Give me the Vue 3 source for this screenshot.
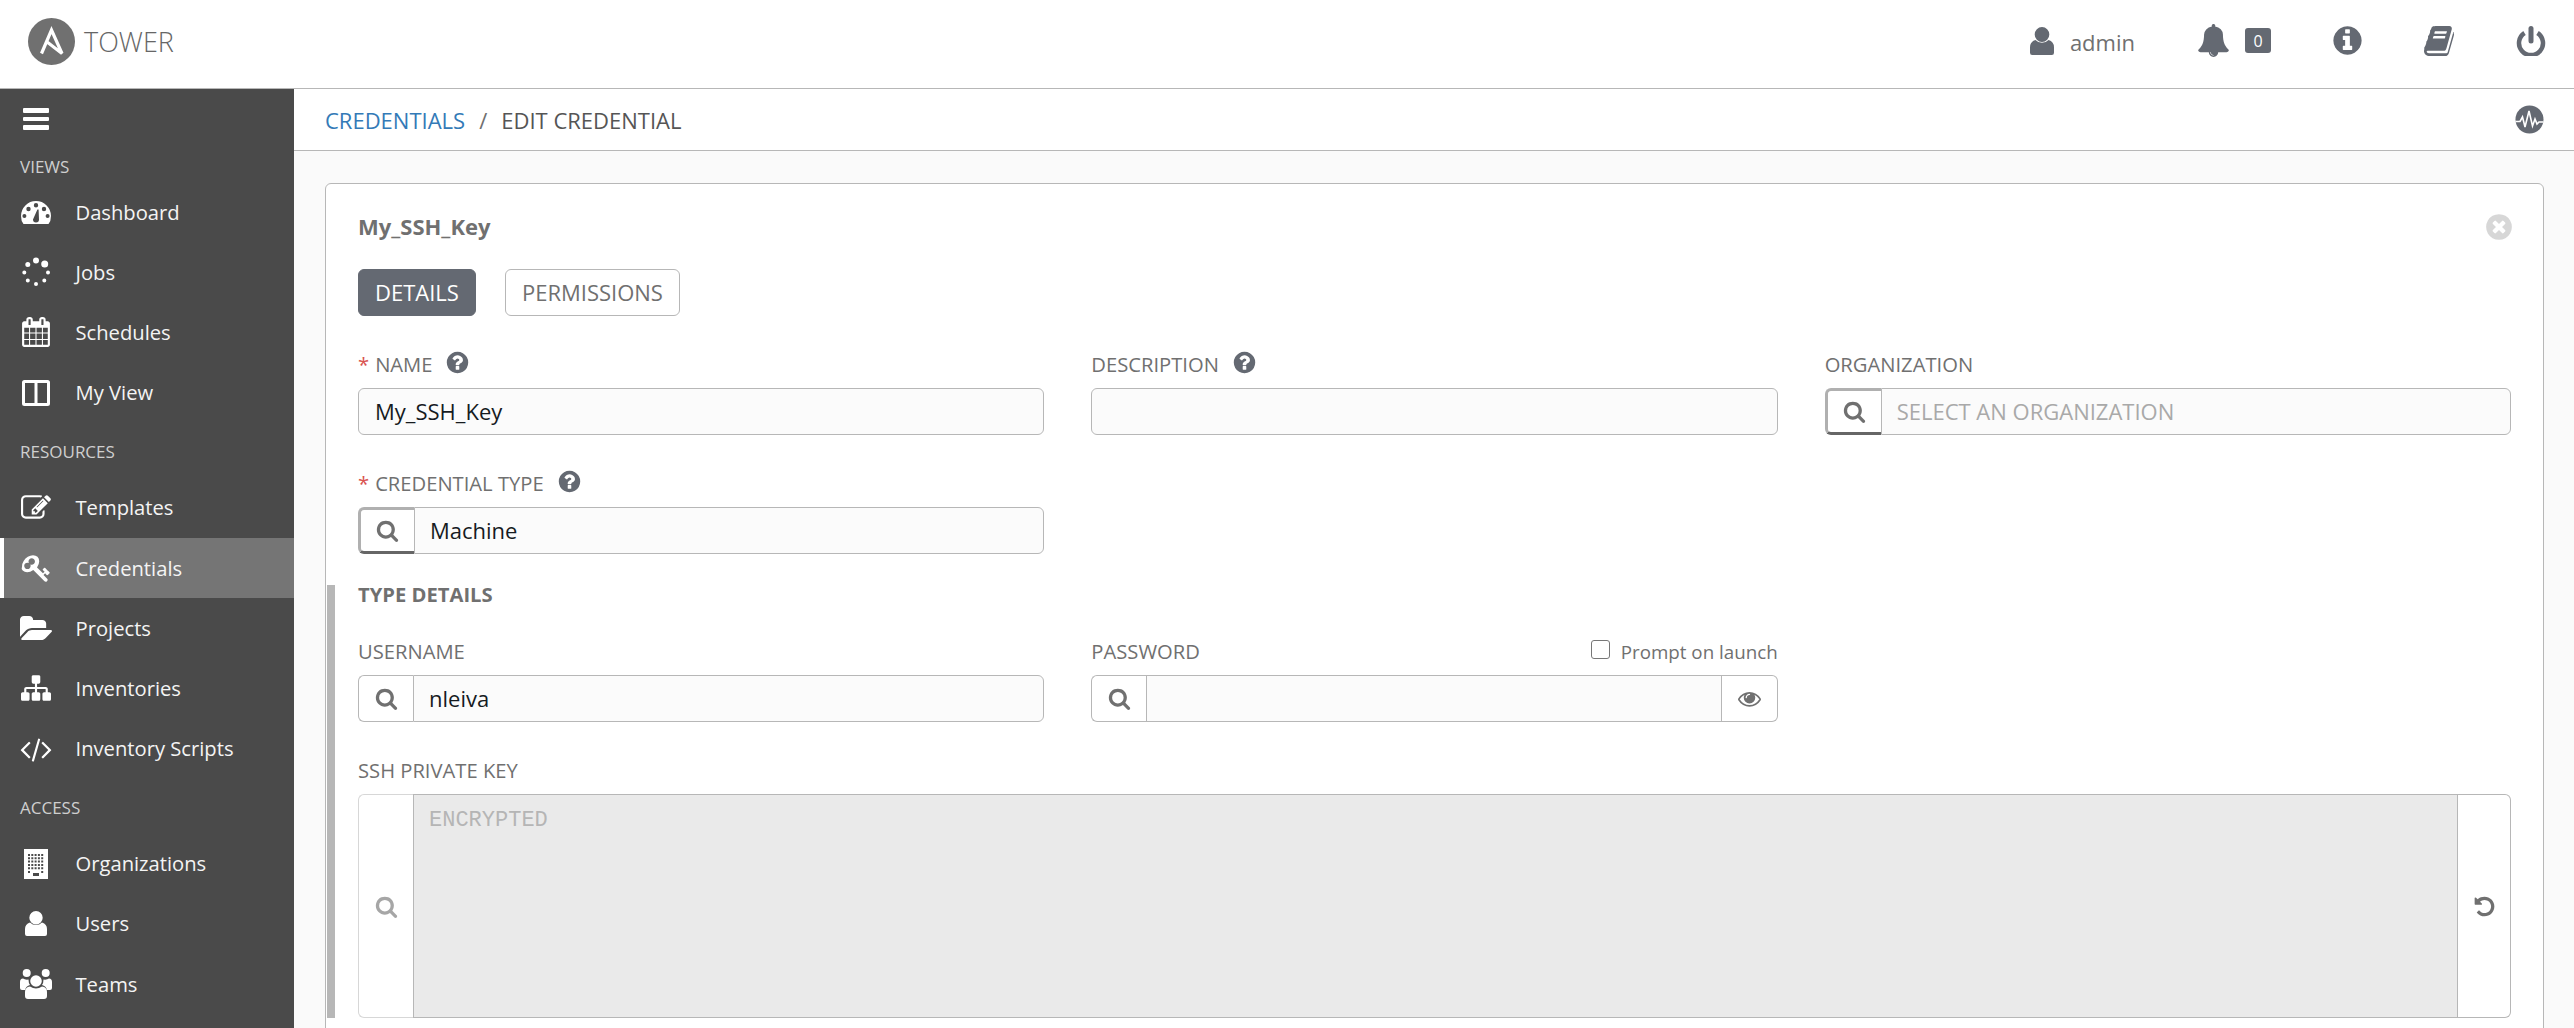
<script setup>
const circ = (cx, cy, r) => `M${cx - r} ${cy}a${r} ${r} 0 1 0 ${2 * r} 0a${r} ${r} 0 1 0 ${-2 * r} 0z`
const rect = (x, y, w, h) => `M${x} ${y}h${w}v${h}h${-w}z`

const P = {
  search: 'M1216 832q0-185-131.5-316.5T768 384 451.5 515.5 320 832t131.5 316.5T768 1280t316.5-131.5T1216 832zm512 832q0 52-38 90t-90 38q-54 0-90-38l-343-342q-179 124-399 124-143 0-273.5-55.5t-225-150-150-225T64 832t55.5-273.5 150-225 225-150T768 128t273.5 55.5 225 150 150 225T1472 832q0 220-124 399l343 343q37 37 37 90z',
  bell: 'M912 1696q0-16-16-16-59 0-101.5-42.5T752 1536q0-16-16-16t-16 16q0 73 51.5 124.5T896 1712q16 0 16-16zm816-288q0 52-38 90t-90 38h-448q0 106-75 181t-181 75-181-75-75-181H192q-52 0-90-38t-38-90q50-42 91-88t85-119.5 74.5-158.5 50-206T384 576q0-152 117-282.5T808 132q-8-19-8-39 0-40 28-68t68-28 68 28 28 68q0 20-8 39 190 28 307 158.5T1408 576q0 139 19.5 260t50 206 74.5 158.5 85 119.5 91 88z',
  info: 'M1152 1376v-160q0-14-9-23t-23-9h-96V672q0-14-9-23t-23-9H672q-14 0-23 9t-9 23v160q0 14 9 23t23 9h96v320h-96q-14 0-23 9t-9 23v160q0 14 9 23t23 9h448q14 0 23-9t9-23zm-128-896V320q0-14-9-23t-23-9H800q-14 0-23 9t-9 23v160q0 14 9 23t23 9h192q14 0 23-9t9-23zm640 416q0 209-103 385.5T1281.5 1561 896 1664t-385.5-103T231 1281.5 128 896t103-385.5T510.5 231 896 128t385.5 103T1561 510.5 1664 896z',
  question: 'M1024 1376v-192q0-14-9-23t-23-9H800q-14 0-23 9t-9 23v192q0 14 9 23t23 9h192q14 0 23-9t9-23zm256-672q0-88-55.5-163T1086 425t-170-41q-243 0-371 213-15 24 8 42l132 100q7 6 19 6 16 0 25-12 53-68 86-92 34-24 86-24 48 0 85.5 26t37.5 59q0 38-20 61t-68 45q-63 28-115.5 86.5T768 1020v36q0 14 9 23t23 9h192q14 0 23-9t9-23q0-19 21.5-49.5T1109 957q32-18 49-28.5t46-35 44.5-48 28-60.5 12.5-81zm384 192q0 209-103 385.5T1281.5 1561 896 1664t-385.5-103T231 1281.5 128 896t103-385.5T510.5 231 896 128t385.5 103T1561 510.5 1664 896z',
  close: 'M1277 1122q0-26-19-45L1077 896l181-181q19-19 19-45 0-27-19-46l-90-90q-19-19-46-19-26 0-45 19L896 715 715 534q-19-19-45-19-27 0-46 19l-90 90q-19 19-19 46 0 26 19 45l181 181-181 181q-19 19-19 45 0 27 19 46l90 90q19 19 46 19 26 0 45-19l181-181 181 181q19 19 45 19 27 0 46-19l90-90q19-19 19-46zm387-226q0 209-103 385.5T1281.5 1561 896 1664t-385.5-103T231 1281.5 128 896t103-385.5T510.5 231 896 128t385.5 103T1561 510.5 1664 896z',
  book: 'M1639 478q40 57 18 129l-275 906q-19 64-76.5 107.5T1183 1664H260q-77 0-148.5-53.5T12 1479q-24-67-2-127 0-4 3-27t4-37q1-8-3-21.5t-3-19.5q2-11 8-21t16.5-23.5T51 1179q23-38 45-91.5t30-91.5q3-10 .5-30t-.5-28q3-11 17-28t17-23q21-36 42-92t25-90q1-9-2.5-32t.5-28q4-13 22-30.5t22-22.5q19-26 42.5-84.5T339 418q1-8-3-25.5t-2-26.5q2-8 9-18t18-23 17-21q8-12 16.5-30.5t15-35 16-36 19.5-32T492 138.5 526 127t45 5l-1 3q54-16 73-16h761q74 0 114 56t18 130l-274 906q-36 119-71.5 153.5T1062 1398H193q-27 0-38 15-11 16-1 43 24 70 144 70h923q29 0 56-15.5t35-41.5l300-987q7-22 5-57 38 15 59 43zm-1064 2q-4 13 2 22.5t20 9.5h608q13 0 25.5-9.5T1247 480l21-64q4-13-2-22.5t-20-9.5H638q-13 0-25.5 9.5T596 416zm-83 256q-4 13 2 22.5t20 9.5h608q13 0 25.5-9.5T1164 736l21-64q4-13-2-22.5t-20-9.5H555q-13 0-25.5 9.5T513 672z',
  eye: 'M1664 960q-152-236-381-353 61 104 61 225 0 185-131.5 316.5T896 1280t-316.5-131.5T448 832q0-121 61-225-229 117-381 353 133 205 333.5 326.5T896 1408t434.5-121.5T1664 960zM944 576q0-20-14-34t-34-14q-125 0-214.5 89.5T592 832q0 20 14 34t34 14 34-14 14-34q0-86 61-147t147-61q20 0 34-14t14-34zm848 384q0 34-20 69-140 230-376.5 368.5T896 1536t-499.5-139T20 1029q-20-35-20-69t20-69q140-229 376.5-368T896 384t499.5 139T1772 891q20 35 20 69z',
  undo: 'M1664 896q0 156-61 298t-164 245-245 164-298 61q-172 0-327-72.5T305 1387q-7-10-6.5-22.5t8.5-20.5l137-138q10-9 25-9 16 2 23 12 73 95 179 147t225 52q104 0 198.5-40.5T1258 1258t109.5-163.5T1408 896t-40.5-198.5T1258 534t-163.5-109.5T896 384q-98 0-188 35.5T548 521l137 138q31 30 14 69-17 40-59 40H192q-26 0-45-19t-19-45V256q0-42 40-59 39-17 69 14l130 129q107-101 244.5-156.5T896 128q156 0 298 61t245 164 164 245 61 298z',
  user: circ(11, 6.7, 6.7) + 'M0 23v-5q0-5 5-6.5q2.6 2.6 6 2.6t6-2.6q5 1.5 5 6.5v5q0 2-2 2H2q-2 0-2-2z'
}

const buildingHoles = () => {
  let d = rect(0, 0, 24, 30)
  for (let c = 0; c < 5; c++) {
    for (let r = 0; r < 5; r++) d += rect(4 + c * 3.3, 5 + r * 3.3, 2, 2)
  }
  d += rect(4, 22, 2, 2) + rect(17.2, 22, 2, 2) + rect(9, 24, 6, 3)
  return d
}

const sections = [
  {
    title: 'VIEWS',
    items: [
      { label: 'Dashboard', w: 30, h: 23, vb: '0 0 30 23', rule: 'evenodd',
        d: 'M2.5 23Q0 20 0 15A15 15 0 0 1 30 15Q30 20 27.5 23Z' + circ(15, 4.2, 2.2) + circ(7.5, 8, 2.2) + circ(23, 8, 2.2) + circ(3.4, 15, 2) + circ(26.6, 15, 2) + 'M12 18.5A3 3 0 0 0 18 18.5L17.6 8.5H16.4Z' },
      { label: 'Jobs', w: 30, h: 30, vb: '0 0 30 30',
        d: circ(15, 3.5, 3) + circ(23.7, 7, 3.5) + circ(27, 15.5, 2) + circ(23.3, 23.5, 2) + circ(15, 27, 2) + circ(6.8, 23.5, 2) + circ(3.3, 15.5, 2) + circ(6.8, 7.5, 2.5) },
      { label: 'Schedules', w: 30, h: 30, vb: '0 0 1792 1792',
        d: 'M192 1664h288v-288H192v288zm352 0h320v-288H544v288zm-352-352h288V992H192v320zm352 0h320V992H544v320zM192 928h288V640H192v288zm736 736h320v-288H928v288zM544 928h320V640H544v288zm768 736h288v-288h-288v288zm-384-352h320V992H928v320zM576 448V160q0-13-9.5-22.5T544 128h-64q-13 0-22.5 9.5T448 160v288q0 13 9.5 22.5T480 480h64q13 0 22.5-9.5T576 448zm736 864h288V992h-288v320zM928 928h320V640H928v288zm384 0h288V640h-288v288zm32-480V160q0-13-9.5-22.5T1312 128h-64q-13 0-22.5 9.5T1216 160v288q0 13 9.5 22.5t22.5 9.5h64q13 0 22.5-9.5T1344 448zm384-64v1280q0 52-38 90t-90 38H192q-52 0-90-38t-38-90V384q0-52 38-90t90-38h128v-96q0-66 47-113T480 0h64q66 0 113 47t47 113v96h384v-96q0-66 47-113t113-47h64q66 0 113 47t47 113v96h128q52 0 90 38t38 90z' },
      { label: 'My View', w: 28, h: 26, vb: '0 0 28 26', rule: 'evenodd',
        d: 'M2.5 0h23A2.5 2.5 0 0 1 28 2.5v21a2.5 2.5 0 0 1-2.5 2.5h-23A2.5 2.5 0 0 1 0 23.5v-21A2.5 2.5 0 0 1 2.5 0z' + rect(3, 3, 9.5, 20) + rect(15.5, 3, 9.5, 20) }
    ]
  },
  {
    title: 'RESOURCES',
    items: [
      { label: 'Templates', w: 30, h: 30, vb: '0 0 1792 1792',
        d: 'M888 1184l116-116-152-152-116 116v56h96v96h56zm440-720q-16-16-33 1L945 815q-17 17-1 33t33-1l350-350q17-17 1-33zm80 594v190q0 119-84.5 203.5T1120 1536H288q-119 0-203.5-84.5T0 1248V416q0-119 84.5-203.5T288 128h832q63 0 117 25 15 7 18 23 3 17-9 29l-49 49q-14 14-32 8-23-6-45-6H288q-66 0-113 47t-47 113v832q0 66 47 113t113 47h832q66 0 113-47t47-113v-126q0-13 9-22l64-64q15-15 35-7t20 29zm-96-738l288 288-672 672H640V992zm444 132l-92 92-288-288 92-92q28-28 68-28t68 28l152 152q28 28 28 68t-28 68z' },
      { label: 'Credentials', active: true, w: 30, h: 30, vb: '0 0 1792 1792',
        d: 'M832 512q0-80-56-136t-136-56-136 56-56 136q0 42 19 83-41-19-83-19-80 0-136 56t-56 136 56 136 136 56 136-56 56-136q0-42-19-83 41 19 83 19 80 0 136-56t56-136zm851 704q0 17-49 66t-66 49q-9 0-28.5-16t-36.5-33-38.5-40-24.5-26l-96 96 220 220q28 28 28 68 0 42-39 81t-81 39q-40 0-68-28l-671-671q-176 131-365 131-163 0-265.5-102.5T64 784q0-160 95-313t248-248 313-95q163 0 265.5 102.5T1088 496q0 189-131 365l355 355 96-96q-2-2-26-24.5t-40-38.5-33-36.5-16-28.5q0-17 49-66t66-49q13 0 23 10 6 6 46 44.5t82 79.5 86.5 86 73 78 28.5 41z' },
      { label: 'Projects', w: 32, h: 24, vb: '0 0 1879 1536',
        d: 'M1879 952q0 31-31 66l-336 396q-43 51-120.5 86.5T1248 1536H160q-34 0-60.5-13T73 1480q0-31 31-66l336-396q43-51 120.5-86.5T704 896h1088q34 0 60.5 13t26.5 43zM1536 608v160H704q-94 0-197 47.5T343 935L6 1331l-6 7V224q0-92 66-158t158-66h320q92 0 158 66t66 158v32h544q92 0 158 66t66 158z' },
      { label: 'Inventories', w: 30, h: 30, vb: '0 0 1792 1792',
        d: 'M1792 1248v320q0 40-28 68t-68 28h-320q-40 0-68-28t-28-68v-320q0-40 28-68t68-28h96V960H960v192h96q40 0 68 28t28 68v320q0 40-28 68t-68 28H736q-40 0-68-28t-28-68v-320q0-40 28-68t68-28h96V960H320v192h96q40 0 68 28t28 68v320q0 40-28 68t-68 28H96q-40 0-68-28t-28-68v-320q0-40 28-68t68-28h96V960q0-52 38-90t90-38h512V640h-96q-40 0-68-28t-28-68V224q0-40 28-68t68-28h320q40 0 68 28t28 68v320q0 40-28 68t-68 28h-96v192h512q52 0 90 38t38 90v192h96q40 0 68 28t28 68z' },
      { label: 'Inventory Scripts', w: 32, h: 30, vb: '0 0 1920 1792',
        d: 'M617 1399l-50 50q-10 10-23 10t-23-10L55 983q-10-10-10-23t10-23l466-466q10-10 23-10t23 10l50 50q10 10 10 23t-10 23L224 960l393 393q10 10 10 23t-10 23zm591-1067L835 1623q-4 13-15.5 19.5T796 1645l-62-17q-13-4-19.5-15.5T712 1588l373-1291q4-13 15.5-19.5t23.5-2.5l62 17q13 4 19.5 15.5t2.5 24.5zm657 651l-466 466q-10 10-23 10t-23-10l-50-50q-10-10-10-23t10-23l393-393-393-393q-10-10-10-23t10-23l50-50q10-10 23-10t23 10l466 466q10 10 10 23t-10 23z' }
    ]
  },
  {
    title: 'ACCESS',
    items: [
      { label: 'Organizations', w: 24, h: 30, vb: '0 0 24 30', rule: 'evenodd', d: buildingHoles() },
      { label: 'Users', w: 22, h: 25, vb: '0 0 22 25', d: P.user },
      { label: 'Teams', w: 32, h: 30, vb: '0 0 32 30',
        d: circ(6.7, 4, 4) + circ(25.7, 4, 4) + circ(16, 12, 5.8) + 'M0 13Q0 9.5 3 9.5Q5 11 8.5 10.5Q8.5 14 10 16Q6 17 5 21H2Q0 21 0 19zM32 13Q32 9.5 29 9.5Q27 11 23.5 10.5Q23.5 14 22 16Q26 17 27 21H30Q32 21 32 19zM5 23Q5 18 10 17.5Q13 19.5 16 19.5T22 17.5Q27 18 27 23V27Q27 30 24 30H8Q5 30 5 27z' }
    ]
  }
]
</script>

<template>
  <div class="app">
    <header class="topbar">
      <div class="brand">
        <svg class="logo" width="47" height="47" viewBox="0 0 47 47">
          <circle cx="23.5" cy="23.5" r="23.5" fill="#707070" />
          <path d="M13.5 35.5L23.5 12L34 35.5L18.5 23.5" fill="none" stroke="#fff" stroke-width="3.2" stroke-linejoin="miter" />
        </svg>
        <span class="brand-name">TOWER</span>
      </div>
      <nav class="top-actions">
        <div class="top-user">
          <svg width="24" height="28" viewBox="0 0 22 25" preserveAspectRatio="none" class="ink"><path :d="P.user" /></svg>
          <span class="top-user-name">admin</span>
        </div>
        <div class="top-bell">
          <svg width="33" height="33" viewBox="0 0 1792 1792" class="ink"><path :d="P.bell" /></svg>
          <span class="badge">0</span>
        </div>
        <svg class="top-info ink" width="33" height="33" viewBox="0 0 1792 1792"><path :d="P.info" /></svg>
        <svg class="top-book ink" width="30" height="30" viewBox="0 119 1664 1545" preserveAspectRatio="none"><path :d="P.book" /></svg>
        <svg class="top-power" width="30" height="30" viewBox="0 0 30 30">
          <path d="M8.5 7A12 12 0 1 0 21.5 7" fill="none" stroke="#646972" stroke-width="4.5" />
          <path d="M15 2.5V15" fill="none" stroke="#646972" stroke-width="5" stroke-linecap="round" />
        </svg>
      </nav>
    </header>

    <div class="body">
      <aside class="sidebar">
        <div class="burger"><i></i><i></i><i></i></div>
        <section v-for="(sec, i) in sections" :key="sec.title">
          <div class="side-title" :class="{ first: i === 0 }">{{ sec.title }}</div>
          <div v-for="item in sec.items" :key="item.label" class="side-item" :class="{ active: item.active }">
            <span class="side-icon">
              <svg :width="item.w" :height="item.h" :viewBox="item.vb" preserveAspectRatio="none"><path :d="item.d" :fill-rule="item.rule || 'nonzero'" fill="#fff" /></svg>
            </span>
            <span class="side-label">{{ item.label }}</span>
          </div>
        </section>
      </aside>

      <main class="main">
        <div class="crumbs">
          <span class="crumb-link">CREDENTIALS</span>
          <span class="crumb-sep">/</span>
          <span class="crumb-cur">EDIT CREDENTIAL</span>
          <svg class="pulse" width="29" height="29" viewBox="0 0 29 29">
            <circle cx="14.5" cy="14.5" r="14" fill="#646972" />
            <path d="M0.5 16.5H5L7.5 12L10 22L14 6L17.5 21L20 14L22 19L24 17H28.5" fill="none" stroke="#fff" stroke-width="1.6" />
          </svg>
        </div>

        <div class="content">
          <div class="card">
            <div class="card-head">
              <span class="card-title">My_SSH_Key</span>
              <svg class="ink close" width="30" height="30" viewBox="0 0 1792 1792"><path :d="P.close" /></svg>
            </div>
            <div class="tabs">
              <span class="tab on">DETAILS</span>
              <span class="tab">PERMISSIONS</span>
            </div>

            <div class="grid">
              <div class="field">
                <label class="lbl"><em>*</em> NAME
                  <svg class="help ink" width="25" height="25" viewBox="0 0 1792 1792"><path :d="P.question" /></svg>
                </label>
                <div class="input"><span class="val">My_SSH_Key</span></div>
              </div>
              <div class="field">
                <label class="lbl">DESCRIPTION
                  <svg class="help ink" width="25" height="25" viewBox="0 0 1792 1792"><path :d="P.question" /></svg>
                </label>
                <div class="input"></div>
              </div>
              <div class="field">
                <label class="lbl">ORGANIZATION</label>
                <div class="group">
                  <span class="addon pressed"><svg width="23" height="23" viewBox="0 0 1792 1792"><path :d="P.search" fill="#707070" /></svg></span>
                  <div class="input in-group"><span class="ph">SELECT AN ORGANIZATION</span></div>
                </div>
              </div>
              <div class="field">
                <label class="lbl"><em>*</em> CREDENTIAL TYPE
                  <svg class="help ink" width="25" height="25" viewBox="0 0 1792 1792"><path :d="P.question" /></svg>
                </label>
                <div class="group">
                  <span class="addon pressed"><svg width="23" height="23" viewBox="0 0 1792 1792"><path :d="P.search" fill="#707070" /></svg></span>
                  <div class="input in-group"><span class="val">Machine</span></div>
                </div>
              </div>
            </div>

            <section class="type-details">
              <h3 class="type-title">TYPE DETAILS</h3>
              <div class="grid tight">
                <div class="field">
                  <label class="lbl">USERNAME</label>
                  <div class="group">
                    <span class="addon"><svg width="23" height="23" viewBox="0 0 1792 1792"><path :d="P.search" fill="#707070" /></svg></span>
                    <div class="input in-group"><span class="val">nleiva</span></div>
                  </div>
                </div>
                <div class="field">
                  <label class="lbl between">PASSWORD
                    <span class="prompt"><i class="check"></i>Prompt on launch</span>
                  </label>
                  <div class="group">
                    <span class="addon"><svg width="23" height="23" viewBox="0 0 1792 1792"><path :d="P.search" fill="#707070" /></svg></span>
                    <div class="input in-group"></div>
                    <span class="addon end"><svg width="23" height="23" viewBox="0 0 1792 1792"><path :d="P.eye" fill="#707070" /></svg></span>
                  </div>
                </div>
              </div>
              <div class="field key-field">
                <label class="lbl">SSH PRIVATE KEY</label>
                <div class="group tall">
                  <span class="addon muted"><svg width="23" height="23" viewBox="0 0 1792 1792"><path :d="P.search" fill="#a6a6a6" /></svg></span>
                  <div class="input in-group locked"><span class="enc">ENCRYPTED</span></div>
                  <span class="addon end"><svg width="23" height="23" viewBox="0 0 1792 1792"><path :d="P.undo" fill="#707070" /></svg></span>
                </div>
              </div>
            </section>
          </div>
        </div>
      </main>
    </div>
  </div>
</template>

<style>
html, body { margin: 0; height: 100%; overflow: hidden; background: #fff; }
</style>

<style scoped>
.app {
  height: 1028px;
  display: flex;
  flex-direction: column;
  overflow: hidden;
  font-family: "Open Sans", "Noto Sans", sans-serif;
  color: #707070;
}
.ink { fill: #646972; display: block; flex: none; }

/* top bar */
.topbar {
  height: 88px;
  flex: none;
  border-bottom: 1px solid #b7b7b7;
  display: flex;
  align-items: center;
  justify-content: space-between;
  padding: 0 28px;
  background: #fff;
}
.brand { display: flex; align-items: center; gap: 9px; margin-top: -6px; }
.logo { display: block; }
.brand-name { font-size: 27px; font-weight: 300; color: #666; }
.top-actions { display: flex; align-items: center; margin-top: -7px; }
.top-user { display: flex; align-items: center; gap: 16px; }
.top-user-name { font-size: 22px; color: #707070; margin-top: 3px; }
.top-bell { display: flex; align-items: center; margin-left: 62px; gap: 15px; }
.badge {
  width: 26px; height: 25px; border-radius: 3px; background: #646972; color: #fff;
  font-size: 16px; display: flex; align-items: center; justify-content: center;
}
.top-info { margin-left: 60px; }
.top-book { margin-left: 60px; }
.top-power { margin-left: 62px; display: block; }

.body { flex: 1; display: flex; min-height: 0; }

/* sidebar */
.sidebar { width: 294px; flex: none; background: #4a4a4a; color: #fff; }
.burger { height: 63px; display: flex; flex-direction: column; justify-content: center; gap: 4px; padding: 0 0 3px 23px; box-sizing: border-box; }
.burger i { display: block; width: 26px; height: 4.5px; background: #fff; border-radius: 1px; }
.side-title {
  font-size: 17px; line-height: 24px; color: #cfcfcf; height: 55px; box-sizing: border-box;
  padding: 17px 0 0 20px;
}
.side-title.first { height: 30px; padding-top: 3px; }
.side-item { height: 60.2px; display: flex; align-items: center; box-sizing: border-box; }
.side-item.active { background: #757575; box-shadow: inset 4px 0 0 #fff; }
.side-icon { width: 75.5px; flex: none; display: flex; align-items: center; justify-content: center; padding-right: 3.5px; box-sizing: border-box; }
.side-icon svg { display: block; }
.side-label { font-size: 20.2px; color: #f4f4f4; margin-top: -1px; }

/* main */
.main { flex: 1; min-width: 0; display: flex; flex-direction: column; background: #fafafa; }
.crumbs {
  height: 62px; flex: none; box-sizing: border-box; background: #fff; border-bottom: 1px solid #b7b7b7;
  display: flex; align-items: center; padding: 0 30px 0 31px; font-size: 22px;
}
.crumb-link { color: #337ab7; }
.crumb-sep { margin: 0 14px; color: #707070; }
.crumb-cur { color: #555; }
.pulse { margin-left: auto; display: block; }

.content { flex: 1; min-height: 0; padding: 32px 30px 0 31px; }
.card {
  background: #fff; border: 1px solid #b7b7b7; border-radius: 6px; box-sizing: border-box;
  padding: 29px 32px 40px 32px;
}
.card-head { display: flex; justify-content: space-between; align-items: center; height: 28px; }
.card-title { font-size: 22px; font-weight: 700; color: #707070; margin-top: -2px; }
.close { fill: #d7d7d7; margin-right: -3px; }
.tabs { display: flex; gap: 29px; margin-top: 28px; }
.tab {
  height: 47px; box-sizing: border-box; border: 1px solid #b7b7b7; border-radius: 6px;
  padding: 0 16px 2px; display: flex; align-items: center; font-size: 22px; color: #707070; background: #fff;
}
.tab.on { background: #646972; border-color: #646972; color: #fff; }

.grid { display: grid; grid-template-columns: repeat(3, 1fr); gap: 37px 47px; margin-top: 37px; }
.grid.tight { margin-top: 37px; }
.field { min-width: 0; }
.lbl {
  display: flex; align-items: center; height: 24px; box-sizing: border-box; padding-bottom: 2px; margin-bottom: 11px;
  font-size: 20.2px; color: #707070; white-space: nowrap;
}
.lbl em { color: #d9534f; font-style: normal; margin-right: 6px; }
.help { margin-left: 13px; margin-top: -3px; }
.between { justify-content: space-between; }
.prompt { display: flex; align-items: center; font-size: 18.75px; color: #707070; }
.check { width: 19px; height: 19px; border: 1px solid #777; border-radius: 3px; box-sizing: border-box; margin: -4px 11px 0 0; background: #fff; }

.input {
  height: 47px; box-sizing: border-box; background: #fbfbfb; border: 1px solid #b7b7b7; border-radius: 6px;
  padding: 0 16px 2px; display: flex; align-items: center; font-size: 22px;
}
.val { color: #161b1f; }
.ph { color: #a9a9a9; }
.group { display: flex; height: 47px; }
.addon {
  width: 55px; flex: none; box-sizing: border-box; background: #fff; border: 1px solid #b7b7b7; border-right: 0;
  border-radius: 6px 0 0 6px; display: flex; align-items: center; justify-content: center;
}
.addon svg { display: block; }
.addon.pressed { width: 56px; border: 3px solid #b0b0b0; border-bottom-color: #666; border-right: 0; }
.addon.end { width: 56px; border: 1px solid #b7b7b7; border-left: 0; border-radius: 0 6px 6px 0; }
.tall .addon.end { width: 53px; }
.addon.muted { border-color: #d7d7d7; }
.in-group { flex: 1; min-width: 0; border-radius: 0; padding-left: 15px; }
.group > .in-group:last-child { border-radius: 0 6px 6px 0; }

.type-details { margin: 31px 0 0 -31px; border-left: 8px solid #b7b7b7; padding-left: 23px; }
.type-title { margin: 0; font-size: 20.2px; line-height: 18px; font-weight: 700; color: #707070; }
.key-field { margin-top: 37px; }
.tall { height: 224px; }
.locked { height: 100%; background: #eaeaea; align-items: flex-start; padding-top: 13px; }
.enc { font-family: "Liberation Mono", monospace; font-size: 22px; color: #b5b5b5; }
</style>
